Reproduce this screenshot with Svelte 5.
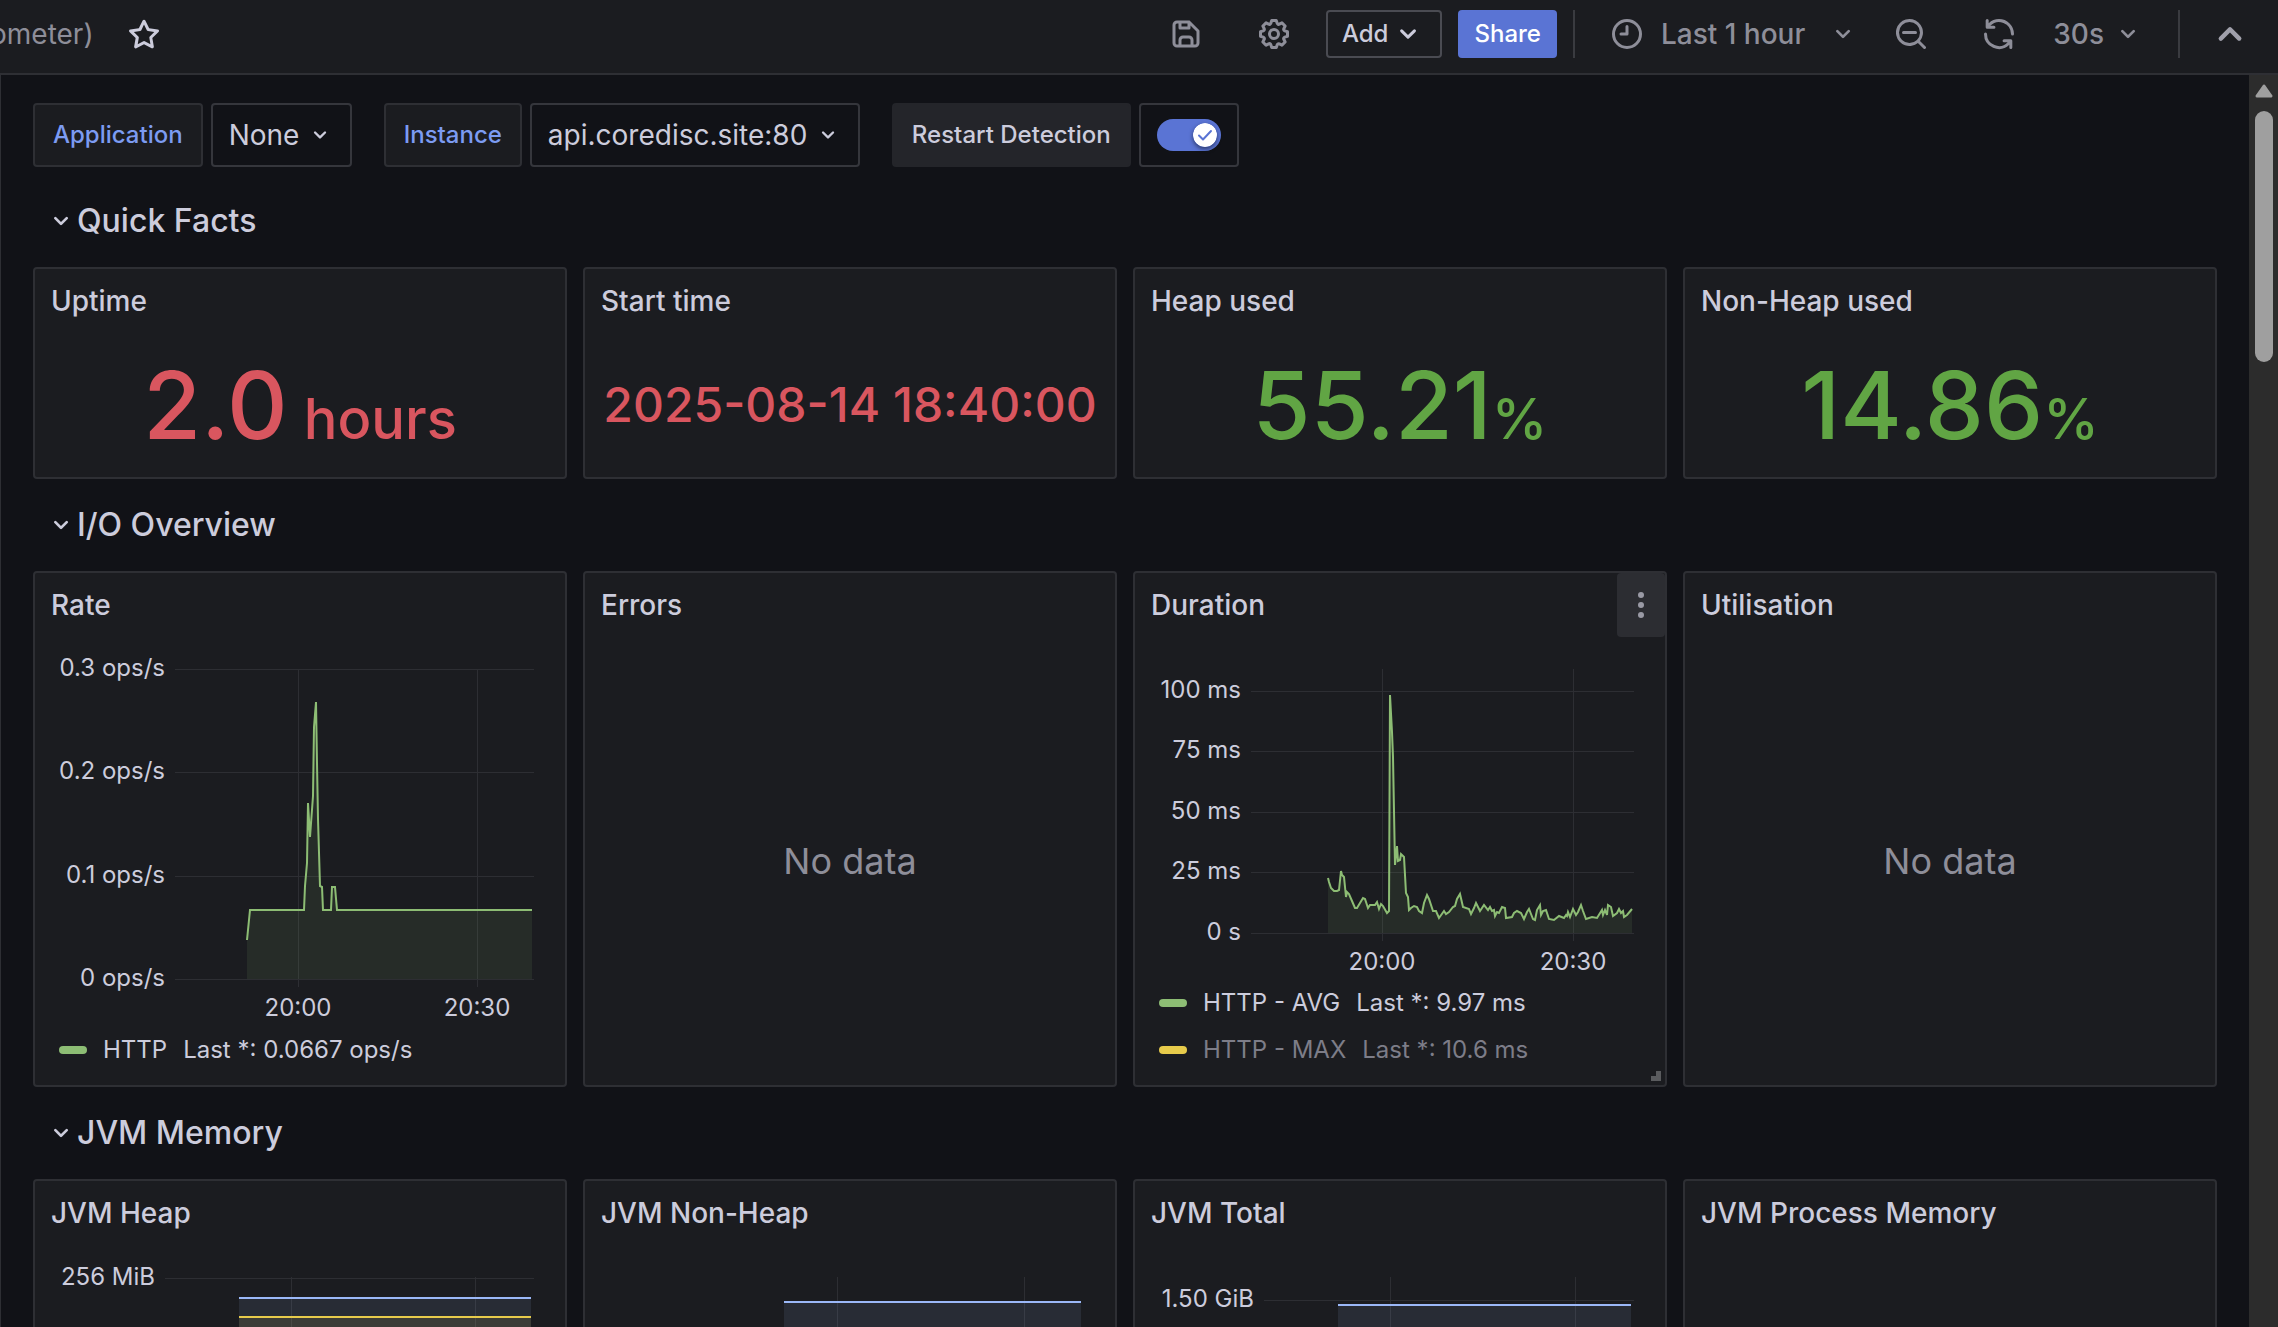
<script lang="ts">
  type Tick = { at: number; label?: string };
  type Series = { stroke: string; fill: string; points: number[][] };
  type Legend = { color: string; name: string; value: string; muted?: boolean };
  type Chart = {
    height: number;
    left: number;
    top: number;
    base: number;
    yTicks: Tick[];
    xTicks: Tick[];
    series: Series[];
    legend: Legend[];
  };
  type Panel = { title: string; chart?: Chart; noData?: boolean; menu?: boolean };

  const icons = {
    star: "M22,9.67A1,1,0,0,0,21.14,9l-5.69-.83L12.9,3a1,1,0,0,0-1.8,0L8.55,8.16,2.86,9a1,1,0,0,0-.81.68,1,1,0,0,0,.25,1l4.13,4-1,5.68A1,1,0,0,0,6.9,21.44L12,18.77l5.1,2.67a.93.93,0,0,0,.46.12,1,1,0,0,0,.59-.19,1,1,0,0,0,.4-1l-1-5.68,4.13-4A1,1,0,0,0,22,9.67Zm-6.15,4a1,1,0,0,0-.29.88l.72,4.2-3.76-2a1.06,1.06,0,0,0-.94,0l-3.76,2,.72-4.2a1,1,0,0,0-.29-.88l-3-3,4.21-.61a1,1,0,0,0,.76-.55L12,5.7l1.88,3.82a1,1,0,0,0,.76.55l4.21.61Z",
    save: "M20.71,9.29l-6-6a1,1,0,0,0-.32-.21A1.09,1.09,0,0,0,14,3H6A3,3,0,0,0,3,6V18a3,3,0,0,0,3,3H18a3,3,0,0,0,3-3V10A1,1,0,0,0,20.71,9.29ZM9,5h4V7H9Zm6,14H9V16a1,1,0,0,1,1-1h4a1,1,0,0,1,1,1Zm4-1a1,1,0,0,1-1,1H17V16a3,3,0,0,0-3-3H10a3,3,0,0,0-3,3v3H6a1,1,0,0,1-1-1V6A1,1,0,0,1,6,5H7V8A1,1,0,0,0,8,9h6a1,1,0,0,0,1-1V6.41l4,4Z",
    cog: "M21.32,9.55l-1.89-.63.89-1.78A1,1,0,0,0,20.13,6L18,3.87a1,1,0,0,0-1.15-.19l-1.78.89-.63-1.89A1,1,0,0,0,13.5,2h-3a1,1,0,0,0-.95.68L8.92,4.57,7.14,3.68A1,1,0,0,0,6,3.87L3.87,6a1,1,0,0,0-.19,1.15l.89,1.78-1.89.63A1,1,0,0,0,2,10.5v3a1,1,0,0,0,.68.95l1.89.63-.89,1.78A1,1,0,0,0,3.87,18L6,20.13a1,1,0,0,0,1.15.19l1.78-.89.63,1.89a1,1,0,0,0,.95.68h3a1,1,0,0,0,.95-.68l.63-1.89,1.78.89A1,1,0,0,0,18,20.13L20.13,18a1,1,0,0,0,.19-1.15l-.89-1.78,1.89-.63A1,1,0,0,0,22,13.5v-3A1,1,0,0,0,21.32,9.55ZM20,12.78l-1.2.4A2,2,0,0,0,17.64,16l.57,1.14-1.1,1.1L16,17.64a2,2,0,0,0-2.79,1.16l-.4,1.2H11.22l-.4-1.2A2,2,0,0,0,8,17.64l-1.14.57-1.1-1.1L6.36,16A2,2,0,0,0,5.2,13.18L4,12.78V11.22l1.2-.4A2,2,0,0,0,6.36,8L5.79,6.89l1.1-1.1L8,6.36A2,2,0,0,0,10.82,5.2l.4-1.2h1.56l.4,1.2A2,2,0,0,0,16,6.36l1.14-.57,1.1,1.1L17.64,8a2,2,0,0,0,1.16,2.79l1.2.4ZM12,8a4,4,0,1,0,4,4A4,4,0,0,0,12,8Zm0,6a2,2,0,1,1,2-2A2,2,0,0,1,12,14Z",
    clock: "M12,2A10,10,0,1,0,22,12,10,10,0,0,0,12,2Zm0,18a8,8,0,1,1,8-8A8,8,0,0,1,12,20ZM12,6a1,1,0,0,0-1,1v4H8a1,1,0,0,0,0,2h4a1,1,0,0,0,1-1V7A1,1,0,0,0,12,6Z",
    zoomOut: "M21.71,20.29,18,16.61A9,9,0,1,0,16.61,18l3.68,3.68a1,1,0,0,0,1.42,0A1,1,0,0,0,21.71,20.29ZM11,18a7,7,0,1,1,7-7A7,7,0,0,1,11,18Zm4-8H7a1,1,0,0,0,0,2h8a1,1,0,0,0,0-2Z",
    sync: "M19.91,15.51H15.38a1,1,0,0,0,0,2h2.4A8,8,0,0,1,4,12a1,1,0,0,0-2,0,10,10,0,0,0,16.88,7.23V21a1,1,0,0,0,2,0V16.5A1,1,0,0,0,19.91,15.51ZM12,2A10,10,0,0,0,5.12,4.77V3a1,1,0,0,0-2,0V7.5a1,1,0,0,0,1,1h4.5a1,1,0,0,0,0-2H6.22A8,8,0,0,1,20,12a1,1,0,0,0,2,0A10,10,0,0,0,12,2Z",
    down: "M17,9.17a1,1,0,0,0-1.41,0L12,12.71,8.46,9.17a1,1,0,0,0-1.41,0,1,1,0,0,0,0,1.42l4.24,4.24a1,1,0,0,0,1.42,0L17,10.59A1,1,0,0,0,17,9.17Z",
    up: "M17,13.41,12.71,9.17a1,1,0,0,0-1.42,0L7.05,13.41a1,1,0,0,0,0,1.42,1,1,0,0,0,1.41,0L12,11.29l3.54,3.54a1,1,0,0,0,.7.29,1,1,0,0,0,.71-.29A1,1,0,0,0,17,13.41Z",
  };

  const green = "#8dbd74";
  const yellow = "#e7cb4b";
  const blue = "#9bb8f8";

  const rate: number[][] = [
    [212, 303], [215, 273], [269, 273], [270, 249], [272, 226], [273, 166], [275, 200], [278, 159],
    [279, 90], [281, 65], [282, 126], [283, 182], [285, 249], [287, 250], [288, 273], [296, 273],
    [297, 250], [300, 250], [302, 273], [497, 273],
  ];

  const duration: number[][] = [
    [193, 241], [194, 245], [196, 251], [199, 254], [202, 254], [204, 253], [206, 234], [207, 238],
    [209, 240], [211, 260], [212, 255], [214, 257], [217, 264], [220, 271], [222, 271], [225, 266],
    [228, 261], [230, 262], [233, 271], [235, 268], [240, 268], [242, 265], [244, 272], [246, 267],
    [248, 269], [252, 276], [254, 274], [255, 58], [257, 95], [258, 120], [260, 228], [262, 209],
    [263, 224], [265, 223], [266, 217], [269, 220], [271, 256], [273, 260], [274, 273], [276, 271],
    [279, 269], [282, 270], [284, 274], [287, 276], [289, 266], [292, 258], [294, 262], [298, 274],
    [301, 274], [304, 281], [309, 274], [311, 277], [314, 275], [318, 270], [320, 269], [322, 262],
    [325, 257], [328, 270], [334, 272], [336, 277], [339, 271], [341, 266], [345, 274], [349, 268],
    [353, 273], [355, 270], [357, 274], [359, 273], [360, 279], [362, 275], [364, 276], [367, 270],
    [370, 271], [371, 281], [377, 280], [379, 276], [382, 274], [386, 276], [389, 282], [392, 275],
    [394, 272], [396, 277], [398, 282], [400, 283], [402, 273], [405, 268], [406, 278], [408, 274],
    [411, 273], [414, 282], [419, 283], [424, 279], [429, 281], [431, 278], [432, 279], [433, 275],
    [435, 280], [438, 272], [441, 278], [443, 275], [446, 268], [448, 274], [451, 282], [457, 280],
    [462, 281], [467, 273], [468, 278], [470, 273], [472, 278], [473, 268], [476, 270], [478, 279],
    [482, 276], [484, 272], [486, 276], [488, 274], [489, 280], [492, 278], [497, 272],
  ];

  const stats = [
    { title: "Uptime", value: "2.0", unit: "hours", tone: "red", spaced: true },
    { title: "Start time", value: "2025-08-14 18:40:00", tone: "red", small: true },
    { title: "Heap used", value: "55.21", unit: "%", tone: "green" },
    { title: "Non-Heap used", value: "14.86", unit: "%", tone: "green" },
  ];

  const io: Panel[] = [
    {
      title: "Rate",
      chart: {
        height: 389,
        left: 140,
        top: 32,
        base: 342,
        yTicks: [
          { at: 32, label: "0.3 ops/s" },
          { at: 135, label: "0.2 ops/s" },
          { at: 239, label: "0.1 ops/s" },
          { at: 342, label: "0 ops/s" },
        ],
        xTicks: [{ at: 263, label: "20:00" }, { at: 442, label: "20:30" }],
        series: [{ stroke: green, fill: "rgba(141, 189, 116, 0.1)", points: rate }],
        legend: [{ color: green, name: "HTTP", value: "Last *: 0.0667 ops/s" }],
      },
    },
    { title: "Errors", noData: true },
    {
      title: "Duration",
      menu: true,
      chart: {
        height: 342,
        left: 116,
        top: 32,
        base: 296,
        yTicks: [
          { at: 54, label: "100 ms" },
          { at: 114, label: "75 ms" },
          { at: 175, label: "50 ms" },
          { at: 235, label: "25 ms" },
          { at: 296, label: "0 s" },
        ],
        xTicks: [{ at: 247, label: "20:00" }, { at: 438, label: "20:30" }],
        series: [{ stroke: green, fill: "rgba(141, 189, 116, 0.1)", points: duration }],
        legend: [
          { color: green, name: "HTTP - AVG", value: "Last *: 9.97 ms" },
          { color: yellow, name: "HTTP - MAX", value: "Last *: 10.6 ms", muted: true },
        ],
      },
    },
    { title: "Utilisation", noData: true },
  ];

  const memory: Panel[] = [
    {
      title: "JVM Heap",
      chart: {
        height: 389,
        left: 130,
        top: 32,
        base: 342,
        yTicks: [{ at: 33, label: "256 MiB" }],
        xTicks: [{ at: 256 }, { at: 440 }],
        series: [
          { stroke: blue, fill: "rgba(155, 184, 248, 0.1)", points: [[204, 53], [496, 53]] },
          { stroke: yellow, fill: "rgba(231, 203, 75, 0.1)", points: [[204, 72], [496, 72]] },
        ],
        legend: [],
      },
    },
    {
      title: "JVM Non-Heap",
      chart: {
        height: 389,
        left: 130,
        top: 32,
        base: 342,
        yTicks: [],
        xTicks: [{ at: 252 }, { at: 439 }],
        series: [{ stroke: blue, fill: "rgba(155, 184, 248, 0.1)", points: [[199, 57], [496, 57]] }],
        legend: [],
      },
    },
    {
      title: "JVM Total",
      chart: {
        height: 389,
        left: 129,
        top: 32,
        base: 342,
        yTicks: [{ at: 55, label: "1.50 GiB" }],
        xTicks: [{ at: 255 }, { at: 440 }],
        series: [{ stroke: blue, fill: "rgba(155, 184, 248, 0.1)", points: [[203, 60], [496, 60]] }],
        legend: [],
      },
    },
    { title: "JVM Process Memory" },
  ];

  let application = $state("None");
  let instance = $state("api.coredisc.site:80");
  let restartDetection = $state(true);
  let open = $state({ facts: true, io: true, memory: true });

  const line = (points: number[][]) => points.map((p) => p.join(",")).join(" ");
  const area = (points: number[][], base: number) =>
    `${points[0][0]},${base} ${line(points)} ${points[points.length - 1][0]},${base}`;
</script>

{#snippet icon(name: keyof typeof icons, size = "lg")}
  <svg class="icon {size}" viewBox="0 0 24 24" aria-hidden="true"><path d={icons[name]} /></svg>
{/snippet}

{#snippet rowHeading(title: string, key: keyof typeof open)}
  <h2 class="row-heading">
    <button type="button" aria-expanded={open[key]} onclick={() => (open[key] = !open[key])}>
      {@render icon("down", "md")}
      {title}
    </button>
  </h2>
{/snippet}

{#snippet graph(title: string, chart: Chart)}
  <svg class="graph" viewBox="0 0 530 {chart.height}" role="img" aria-label={title}>
    {#each chart.yTicks as tick}
      <rect class="grid-line" x={chart.left} y={tick.at} width={499 - chart.left} height="1" />
      <text x={chart.left - 10} y={tick.at + 7} text-anchor="end">{tick.label}</text>
    {/each}
    {#each chart.xTicks as tick}
      <rect class="grid-line" x={tick.at} y={chart.top} width="1" height={chart.base - chart.top + 8} />
      {#if tick.label}
        <text x={tick.at} y={chart.base + 37} text-anchor="middle">{tick.label}</text>
      {/if}
    {/each}
    {#each chart.series as s}
      <polygon points={area(s.points, chart.base)} fill={s.fill} />
      <polyline points={line(s.points)} stroke={s.stroke} />
    {/each}
  </svg>
  {#if chart.legend.length}
    <ul class="legend">
      {#each chart.legend as item}
        <li class:muted={item.muted}>
          <span class="swatch" style:background={item.color}></span>
          <span>{item.name}</span>
          <span>{item.value}</span>
        </li>
      {/each}
    </ul>
  {/if}
{/snippet}

{#snippet panels(list: Panel[])}
  <div class="panels tall">
    {#each list as panel}
      <section class="panel">
        <header>
          <h3>{panel.title}</h3>
          {#if panel.menu}
            <button type="button" class="panel-menu" aria-label="Panel menu">
              <i></i><i></i><i></i>
            </button>
          {/if}
        </header>
        {#if panel.chart}
          {@render graph(panel.title, panel.chart)}
        {:else if panel.noData}
          <p class="no-data">No data</p>
        {/if}
        {#if panel.menu}
          <span class="resize"></span>
        {/if}
      </section>
    {/each}
  </div>
{/snippet}

<div class="app">
  <header class="toolbar">
    <span class="crumb">ometer)</span>
    <button type="button" class="star" aria-label="Mark as favorite">{@render icon("star")}</button>
    <div class="actions">
      <button type="button" class="tool" aria-label="Save dashboard">{@render icon("save")}</button>
      <button type="button" class="tool" aria-label="Dashboard settings">{@render icon("cog")}</button>
      <button type="button" class="add">Add {@render icon("down")}</button>
      <button type="button" class="share">Share</button>
      <span class="divider"></span>
      <div class="joined">
        <button type="button" class="tool range">
          {@render icon("clock")}
          <span>Last 1 hour</span>
          {@render icon("down", "md")}
        </button>
        <button type="button" class="tool" aria-label="Zoom out time range">{@render icon("zoomOut")}</button>
      </div>
      <div class="joined">
        <button type="button" class="tool" aria-label="Refresh dashboard">{@render icon("sync")}</button>
        <button type="button" class="tool interval">30s {@render icon("down", "md")}</button>
      </div>
      <span class="divider"></span>
      <button type="button" class="collapse" aria-label="Toggle top search bar">
        {@render icon("up", "xl")}
      </button>
    </div>
  </header>

  <div class="body">
    <main>
      <form class="variables">
        <div class="variable">
          <label for="application">Application</label>
          <div class="select">
            <select id="application" bind:value={application}>
              <option>None</option>
            </select>
            {@render icon("down", "sm")}
          </div>
        </div>
        <div class="variable">
          <label for="instance">Instance</label>
          <div class="select">
            <select id="instance" bind:value={instance}>
              <option>api.coredisc.site:80</option>
            </select>
            {@render icon("down", "sm")}
          </div>
        </div>
        <div class="variable">
          <label class="plain" for="restart">Restart Detection</label>
          <div class="switch">
            <input id="restart" type="checkbox" bind:checked={restartDetection} />
            <svg class="knob" class:on={restartDetection} viewBox="0 0 24 24" aria-hidden="true">
              <circle cx="12" cy="12" r="12" />
              <path d="M6 12.5l4 4L18 8" />
            </svg>
          </div>
        </div>
      </form>

      {@render rowHeading("Quick Facts", "facts")}
      {#if open.facts}
        <div class="panels">
          {#each stats as stat}
            <section class="panel">
              <header><h3>{stat.title}</h3></header>
              <p class="stat {stat.tone}" class:small={stat.small}>
                {stat.value}{#if stat.unit}<span class="unit" class:spaced={stat.spaced}>{stat.unit}</span>{/if}
              </p>
            </section>
          {/each}
        </div>
      {/if}

      {@render rowHeading("I/O Overview", "io")}
      {#if open.io}
        {@render panels(io)}
      {/if}

      {@render rowHeading("JVM Memory", "memory")}
      {#if open.memory}
        {@render panels(memory)}
      {/if}
    </main>
    <div class="scrollbar" aria-hidden="true">
      <svg viewBox="0 0 18 14"><path d="M9 2L16 12H2Z" /></svg>
      <span class="thumb"></span>
    </div>
  </div>
</div>

<style>
  :global(body) {
    background: #111217;
  }

  .app {
    --panel: #1b1c20;
    --border: #2e2f34;
    --text: #ccccdc;
    --muted: #8e8e99;
    --primary: #5a74d4;
    display: flex;
    flex-direction: column;
    height: 100vh;
    overflow: hidden;
    background: #111217;
    color: var(--text);
    font-family: Inter, Roboto, sans-serif;
    font-size: 28px;
    line-height: 44px;
  }

  .app * {
    box-sizing: border-box;
  }

  button,
  select {
    padding: 0;
    border: 0;
    background: none;
    color: inherit;
    font: inherit;
    cursor: pointer;
  }

  h2,
  h3,
  p,
  ul {
    margin: 0;
    padding: 0;
    font-weight: 500;
    list-style: none;
  }

  .icon {
    display: block;
    flex: none;
    fill: currentColor;
  }

  .icon.sm {
    width: 28px;
    height: 28px;
  }

  .icon.md {
    width: 32px;
    height: 32px;
  }

  .icon.lg {
    width: 36px;
    height: 36px;
  }

  .icon.xl {
    width: 52px;
    height: 52px;
  }

  /* toolbar */
  .toolbar {
    display: flex;
    flex: none;
    align-items: center;
    padding: 10px 14px 15px 0;
    border-bottom: 2px solid var(--border);
    background: var(--panel);
  }

  .crumb {
    margin-left: -10px;
    color: var(--muted);
  }

  .star {
    margin-left: 32px;
  }

  .actions {
    display: flex;
    align-items: center;
    gap: 16px;
    height: 48px;
    margin-left: auto;
  }

  .joined {
    display: flex;
  }

  .tool {
    display: flex;
    align-items: center;
    gap: 16px;
    padding: 0 18px;
    color: var(--muted);
    font-weight: 500;
  }

  .tool.range {
    padding-right: 16px;
  }

  .range span {
    margin-right: 6px;
  }

  .tool.interval {
    gap: 8px;
  }

  .add,
  .share {
    display: flex;
    align-items: center;
    height: 48px;
    padding: 0 16px;
    border-radius: 4px;
    font-size: 24px;
    font-weight: 500;
  }

  .add {
    gap: 2px;
    padding: 0 14px;
    border: 2px solid #4a4b52;
  }

  .share {
    background: var(--primary);
    color: #fff;
  }

  .divider {
    width: 2px;
    height: 48px;
    background: #3a3b40;
  }

  .collapse {
    display: flex;
    justify-content: center;
    width: 68px;
    color: #a0a0ab;
  }

  /* content */
  .body {
    display: flex;
    flex: 1;
    min-height: 0;
  }

  main {
    flex: 1;
    min-width: 0;
    padding: 28px 32px;
    border-left: 1px solid var(--border);
    overflow: hidden;
  }

  .scrollbar {
    display: flex;
    flex-direction: column;
    align-items: center;
    gap: 13px;
    width: 29px;
    padding-top: 9px;
    background: #2c2c2c;
  }

  .scrollbar svg {
    width: 18px;
    height: 14px;
    fill: #9f9f9f;
    stroke: #9f9f9f;
    stroke-width: 3;
    stroke-linejoin: round;
  }

  .thumb {
    width: 18px;
    height: 251px;
    border-radius: 9px;
    background: #9f9f9f;
  }

  .variables {
    display: flex;
    flex-wrap: wrap;
    gap: 16px 32px;
    margin-bottom: 24px;
  }

  .variable {
    display: flex;
    gap: 8px;
    height: 64px;
  }

  .variable label {
    display: flex;
    align-items: center;
    padding: 0 18px;
    border: 2px solid var(--border);
    border-radius: 4px;
    background: var(--panel);
    color: #7c9bf2;
    font-size: 24px;
    font-weight: 500;
  }

  .variable .plain {
    border-color: #24252a;
    background: #24252a;
    color: var(--text);
  }

  .select,
  .switch {
    display: grid;
    align-items: center;
    border: 2px solid #35363c;
    border-radius: 4px;
  }

  .select > :global(*) {
    grid-area: 1 / 1;
  }

  .select select {
    height: 100%;
    padding: 0 50px 0 16px;
    appearance: none;
  }

  .select .icon {
    justify-self: end;
    margin-right: 16px;
    pointer-events: none;
  }

  .switch {
    padding: 0 16px;
  }

  .switch input {
    grid-area: 1 / 1;
    width: 64px;
    height: 32px;
    margin: 0;
    border-radius: 16px;
    background: #35363c;
    appearance: none;
  }

  .switch input:checked {
    background: var(--primary);
  }

  .knob {
    grid-area: 1 / 1;
    width: 24px;
    height: 24px;
    margin: 0 4px;
    border-radius: 50%;
    box-shadow: 0 2px 4px rgba(0, 0, 0, 0.5);
    pointer-events: none;
  }

  .knob.on {
    justify-self: end;
  }

  .knob circle {
    fill: #fff;
  }

  .knob path {
    fill: none;
    stroke: var(--primary);
    stroke-width: 2;
    stroke-linecap: round;
    stroke-linejoin: round;
  }

  .row-heading {
    height: 60px;
    margin-bottom: 16px;
    padding-left: 12px;
    font-size: 32px;
  }

  .row-heading button {
    display: flex;
    align-items: center;
    height: 60px;
  }

  .panels {
    display: grid;
    grid-template-columns: repeat(4, 1fr);
    grid-auto-rows: 212px;
    gap: 16px;
    margin-bottom: 16px;
  }

  .panels.tall {
    grid-auto-rows: minmax(516px, auto);
  }

  .panel {
    position: relative;
    display: flex;
    flex-direction: column;
    min-width: 0;
    border: 2px solid var(--border);
    border-radius: 4px;
    background: var(--panel);
  }

  .panel header {
    display: flex;
    flex: none;
    align-items: center;
    justify-content: space-between;
    height: 64px;
    padding-left: 16px;
  }

  .panel h3 {
    font-size: 28px;
  }

  .panel-menu {
    display: flex;
    flex-direction: column;
    align-items: center;
    justify-content: center;
    gap: 4px;
    width: 48px;
    height: 64px;
    border-radius: 4px;
    background: #2c2d32;
  }

  .panel-menu i {
    width: 6px;
    height: 6px;
    border-radius: 50%;
    background: #9a9aa5;
  }

  .resize {
    position: absolute;
    right: 4px;
    bottom: 4px;
    width: 10px;
    height: 10px;
    border-right: 5px solid #5a5b5e;
    border-bottom: 5px solid #5a5b5e;
  }

  .stat {
    display: flex;
    flex: 1;
    align-items: baseline;
    justify-content: center;
    font-size: 94px;
    line-height: 144px;
    white-space: nowrap;
  }

  .stat.small {
    font-size: 48px;
  }

  .stat.red {
    color: #d9565f;
  }

  .stat.green {
    color: #61a544;
  }

  .unit {
    font-size: 56px;
    line-height: 64px;
  }

  .unit.spaced {
    margin-left: 16px;
  }

  .no-data {
    display: flex;
    flex: 1;
    align-items: center;
    justify-content: center;
    color: var(--muted);
    font-size: 36px;
    font-weight: 400;
  }

  .graph {
    display: block;
    width: 100%;
  }

  .graph text {
    fill: var(--text);
    font-size: 24px;
  }

  .grid-line {
    fill: #2d2e33;
  }

  .graph polyline {
    fill: none;
    stroke-width: 2;
  }

  .legend {
    padding-left: 24px;
    font-size: 24px;
    font-weight: 400;
    line-height: 47px;
  }

  .legend li {
    display: flex;
    align-items: center;
    gap: 16px;
  }

  .legend .muted {
    color: #7d7d88;
  }

  .swatch {
    width: 28px;
    height: 8px;
    border-radius: 4px;
  }
</style>
